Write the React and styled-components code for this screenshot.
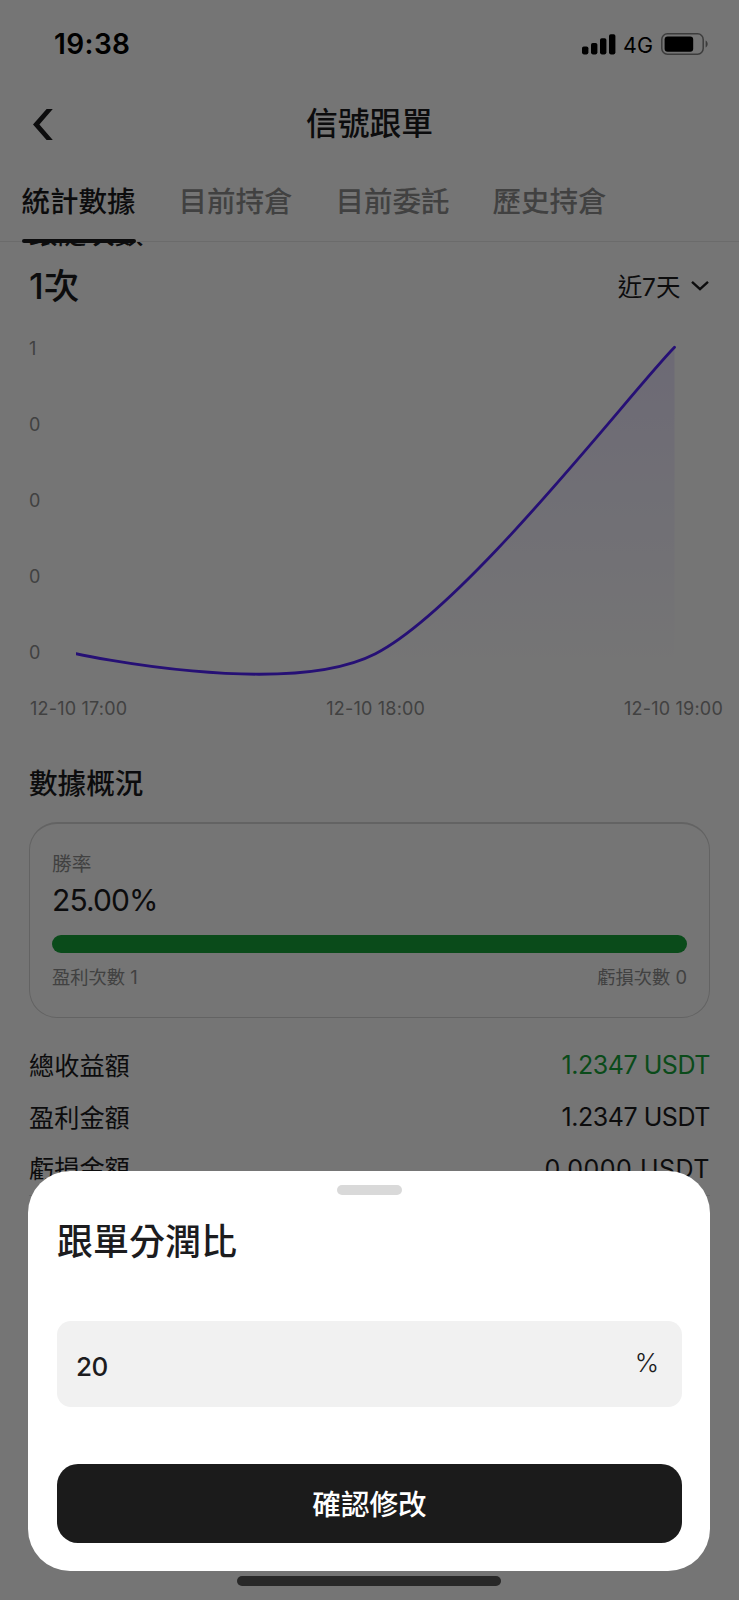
import React from "react";
import styled, { createGlobalStyle } from "styled-components";

const GlobalStyle = createGlobalStyle`
  * {
    box-sizing: border-box;
  }

  body {
    margin: 0;
    background: #ffffff;
    font-family: Inter, "Noto Sans CJK TC", sans-serif;
    color: #1c1c1e;
  }
`;

const Phone = styled.div`
  position: relative;
  display: flex;
  flex-direction: column;
  width: 739px;
  height: 1600px;
  overflow: hidden;
  background: #ffffff;
`;

const StatusBar = styled.div`
  display: flex;
  align-items: center;
  justify-content: space-between;
  flex: none;
  height: 88px;
  padding: 0 31px 0 54px;
  color: #000000;
`;

const Clock = styled.span`
  font-size: 28px;
  font-weight: 600;
  letter-spacing: 0.4px;
`;

const StatusIcons = styled.div`
  display: flex;
  align-items: center;
`;

const Network = styled.span`
  margin: 2px 8px 0 7px;
  font-size: 21.5px;
  line-height: 24px;
`;

const NavBar = styled.header`
  display: grid;
  grid-template-columns: 60px 1fr 60px;
  align-items: center;
  flex: none;
  height: 70px;
  padding: 0 33px;
`;

const BackButton = styled.button`
  display: flex;
  padding: 3px 0 0;
  border: 0;
  background: none;
  color: inherit;
`;

const NavTitle = styled.h1`
  margin: 0;
  padding-top: 1px;
  font-size: 31.8px;
  font-weight: 500;
  line-height: 44px;
  text-align: center;
`;

const Tabs = styled.nav`
  position: relative;
  z-index: 1;
  display: flex;
  gap: 43px;
  flex: none;
  height: 84px;
  padding: 0 21.5px;
  border-bottom: 1px solid #eaeaea;
`;

const Tab = styled.div`
  position: relative;
  padding-top: 25px;
  font-size: 28.5px;
  font-weight: 500;
  line-height: 38px;
  color: ${({ $active }) => ($active ? "#1c1c1e" : "#8e8e8e")};

  &::after {
    content: "";
    display: ${({ $active }) => ($active ? "block" : "none")};
    position: absolute;
    right: 0;
    bottom: -2px;
    left: 0;
    height: 4px;
    border-radius: 2px;
    background: #1c1c1e;
  }
`;

const Content = styled.main`
  flex: 1;
  min-height: 0;
  overflow: hidden;
  padding: 0 29px;
`;

const MetricLabel = styled.div`
  height: 36px;
  margin-top: -26px;
  font-size: 28.6px;
  font-weight: 500;
  line-height: 36px;
`;

const MetricRow = styled.div`
  display: flex;
  align-items: center;
  justify-content: space-between;
  height: 68px;
`;

const MetricValue = styled.div`
  padding-bottom: 5px;
  font-size: 35.5px;
  font-weight: 500;
`;

const RangePicker = styled.div`
  display: flex;
  align-items: center;
  gap: 10px;
  padding: 0 1.5px 1px 0;
  font-size: 24.5px;
`;

const ChartRow = styled.div`
  display: flex;
  height: 372px;
`;

const YAxis = styled.div`
  display: flex;
  flex-direction: column;
  justify-content: space-between;
  width: 47px;
  height: 345px;
  padding-top: 17px;
  font-size: 18px;
  line-height: 24px;
  color: #8e8e8e;
`;

const XAxis = styled.div`
  display: flex;
  justify-content: space-between;
  margin-right: -13px;
  margin-left: 1px;
  font-size: 18px;
  letter-spacing: 0.2px;
  line-height: 34px;
  color: #8e8e8e;
`;

const SectionTitle = styled.h2`
  margin: 39px 0 19px;
  font-size: 28.6px;
  font-weight: 500;
  line-height: 38px;
`;

const Card = styled.section`
  height: 196px;
  padding: 27px 22px 0;
  border: 1px solid #d8d8d8;
  border-top-width: 2px;
  border-radius: 28px;
`;

const CardLabel = styled.div`
  font-size: 19.7px;
  line-height: 26px;
  color: #8e8e8e;
`;

const Rate = styled.div`
  margin-top: 3px;
  font-size: 30px;
  letter-spacing: -0.9px;
  line-height: 40px;
`;

const Progress = styled.div`
  height: 18px;
  margin-top: 15px;
  border-radius: 9px;
  background: #16a33a;
`;

const CardFooter = styled.div`
  display: flex;
  justify-content: space-between;
  margin-top: 10.5px;
  font-size: 18.3px;
  line-height: 26px;
  color: #8e8e8e;
`;

const StatList = styled.div`
  margin-top: 21.5px;
  border-bottom: 1px solid #e3e3e3;
`;

const StatRow = styled.div`
  display: flex;
  align-items: center;
  justify-content: space-between;
  height: 51.8px;
`;

const StatLabel = styled.span`
  padding-bottom: 3px;
  font-size: 25.2px;
`;

const StatValue = styled.span`
  font-size: 25px;
  letter-spacing: ${({ $spacing }) => $spacing};
  margin-right: 0;
  color: ${({ $positive }) => ($positive ? "#16a33a" : "inherit")};
`;

const Backdrop = styled.div`
  position: absolute;
  inset: 0;
  z-index: 2;
  display: flex;
  flex-direction: column;
  align-items: center;
  justify-content: flex-end;
  padding: 0 1px 14.5px 0;
  background: rgba(0, 0, 0, 0.54);
`;

const Sheet = styled.div`
  display: flex;
  flex-direction: column;
  width: 682px;
  height: 400px;
  padding: 14px 28px 0 29px;
  border-radius: 42px;
  background: #ffffff;
`;

const Handle = styled.div`
  align-self: center;
  width: 65px;
  height: 9.5px;
  border-radius: 5px;
  background: #d9d9d9;
`;

const SheetTitle = styled.h2`
  margin: 23px 0 55.5px;
  font-size: 36px;
  font-weight: 500;
  line-height: 48px;
`;

const Field = styled.label`
  display: flex;
  align-items: center;
  height: 86px;
  padding: 0 23px 0 19px;
  border-radius: 14px;
  background: #f1f1f1;
`;

const FieldInput = styled.input`
  flex: 1;
  min-width: 0;
  padding: 4px 0 0;
  border: 0;
  outline: 0;
  background: none;
  color: #1c1c1e;
  font: 500 26px Inter, sans-serif;
  letter-spacing: -0.4px;
`;

const Unit = styled.span`
  padding-bottom: 3px;
  font-size: 26px;
  font-weight: 300;
`;

const ConfirmButton = styled.button`
  height: 78.5px;
  margin-top: 57px;
  padding: 0 0 1px;
  border: 0;
  border-radius: 21px;
  background: #1b1b1b;
  color: #ffffff;
  font: 500 28.6px Inter, "Noto Sans CJK TC", sans-serif;
`;

const HomeIndicator = styled.div`
  width: 264px;
  height: 9.5px;
  margin-top: 5px;
  border-radius: 5px;
  background: #282828;
`;

const SignalIcon = () => (
  <svg width="34" height="21" viewBox="0 0 34 21" fill="currentColor">
    <rect x="0" y="12.4" width="6.4" height="8" rx="1.8" />
    <rect x="9" y="9" width="6.4" height="11.4" rx="1.8" />
    <rect x="18" y="4.3" width="6.4" height="16.1" rx="1.8" />
    <rect x="27" y="0.2" width="6.4" height="20.2" rx="1.8" />
  </svg>
);

const BatteryIcon = () => (
  <svg width="47" height="22" viewBox="0 0 47 22">
    <rect
      x="0.8"
      y="0.8"
      width="41.4"
      height="20.4"
      rx="5.6"
      fill="none"
      stroke="#848484"
      strokeWidth="1.5"
    />
    <rect x="3.6" y="3.4" width="28.6" height="15.4" rx="3" fill="#000000" />
    <path d="M44.6 7.5c1.3.6 2.1 2 2.1 3.5s-.8 2.9-2.1 3.5z" fill="#848484" />
  </svg>
);

const BackIcon = () => (
  <svg width="20" height="31" viewBox="0 0 20 31" fill="currentColor">
    <path d="M13.6 0H19.8L6.4 15.5 19.8 31H13.6L0 15.5z" />
  </svg>
);

const ChevronIcon = () => (
  <svg width="18" height="11" viewBox="0 0 18 11" fill="none">
    <path d="M1 1.8 9 9.2 17 1.8" stroke="currentColor" strokeWidth="2.4" />
  </svg>
);

const TrendChart = () => (
  <svg width="604" height="372" viewBox="76 320 604 372">
    <defs>
      <linearGradient id="trend-fill" x1="0" y1="0" x2="0" y2="1">
        <stop offset="0" stopColor="#5323ff" stopOpacity="0.11" />
        <stop offset="1" stopColor="#5323ff" stopOpacity="0" />
      </linearGradient>
    </defs>
    <path
      d="M76 653.7C76 653.7 285.7 699.7 375.5 653.7C465.3 607.7 629.6 393.3 674.5 347.3V672H76z"
      fill="url(#trend-fill)"
    />
    <path
      d="M76 653.7C76 653.7 285.7 699.7 375.5 653.7C465.3 607.7 629.6 393.3 674.5 347.3"
      fill="none"
      stroke="#5323ff"
      strokeWidth="2.8"
      strokeLinecap="round"
    />
  </svg>
);

const tabs = ["統計數據", "目前持倉", "目前委託", "歷史持倉"];
const yLabels = ["1", "0", "0", "0", "0"];
const xLabels = ["12-10 17:00", "12-10 18:00", "12-10 19:00"];
const stats = [
  { label: "總收益額", value: "1.2347 USDT", spacing: "-0.45px", positive: true },
  { label: "盈利金額", value: "1.2347 USDT", spacing: "-0.45px" },
  { label: "虧損金額", value: "0.0000 USDT", spacing: "0.5px" },
];

const App = () => {
  return (
    <>
      <GlobalStyle />
      <Phone>
        <StatusBar>
          <Clock>19:38</Clock>
          <StatusIcons>
            <SignalIcon />
            <Network>4G</Network>
            <BatteryIcon />
          </StatusIcons>
        </StatusBar>

        <NavBar>
          <BackButton aria-label="返回">
            <BackIcon />
          </BackButton>
          <NavTitle>信號跟單</NavTitle>
        </NavBar>

        <Tabs>
          {tabs.map((tab, index) => (
            <Tab key={tab} $active={index === 0}>
              {tab}
            </Tab>
          ))}
        </Tabs>

        <Content>
          <MetricLabel>跟隨次數</MetricLabel>
          <MetricRow>
            <MetricValue>1次</MetricValue>
            <RangePicker>
              近7天
              <ChevronIcon />
            </RangePicker>
          </MetricRow>

          <ChartRow>
            <YAxis>
              {yLabels.map((label, index) => (
                <span key={index}>{label}</span>
              ))}
            </YAxis>
            <TrendChart />
          </ChartRow>
          <XAxis>
            {xLabels.map((label) => (
              <span key={label}>{label}</span>
            ))}
          </XAxis>

          <SectionTitle>數據概況</SectionTitle>
          <Card>
            <CardLabel>勝率</CardLabel>
            <Rate>25.00%</Rate>
            <Progress />
            <CardFooter>
              <span>盈利次數 1</span>
              <span>虧損次數 0</span>
            </CardFooter>
          </Card>

          <StatList>
            {stats.map(({ label, value, spacing, positive }) => (
              <StatRow key={label}>
                <StatLabel>{label}</StatLabel>
                <StatValue $spacing={spacing} $positive={positive}>
                  {value}
                </StatValue>
              </StatRow>
            ))}
          </StatList>
        </Content>

        <Backdrop>
          <Sheet>
            <Handle />
            <SheetTitle>跟單分潤比</SheetTitle>
            <Field>
              <FieldInput defaultValue="20" />
              <Unit>%</Unit>
            </Field>
            <ConfirmButton>確認修改</ConfirmButton>
          </Sheet>
          <HomeIndicator />
        </Backdrop>
      </Phone>
    </>
  );
};

export default App;
